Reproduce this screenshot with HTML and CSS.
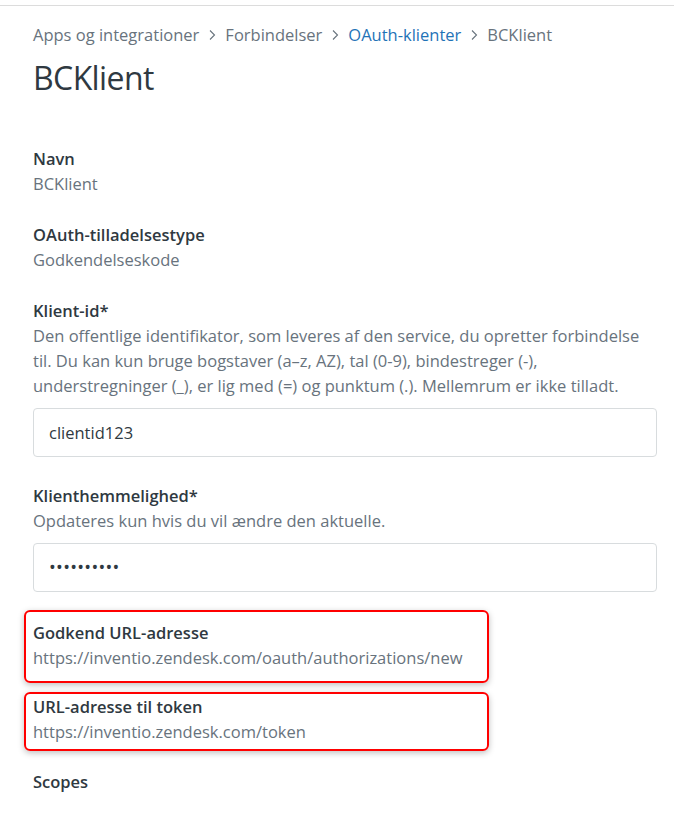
FILE: index.html
```
<!DOCTYPE html>
<html lang="da">
<head>
<meta charset="utf-8">
<title>BCKlient</title>
<link rel="stylesheet" href="styles.css">
</head>
<body>
<div class="topbar"></div>
<main class="page">
  <nav class="crumbs">
    <span class="crumb">Apps og integrationer</span>
    <svg class="chev" width="14" height="12" viewBox="0 0 14 12"><polyline points="5,1.5 9.5,6 5,10.5" fill="none" stroke="#68737d" stroke-width="1.1"/></svg>
    <span class="crumb">Forbindelser</span>
    <svg class="chev" width="14" height="12" viewBox="0 0 14 12"><polyline points="5,1.5 9.5,6 5,10.5" fill="none" stroke="#68737d" stroke-width="1.1"/></svg>
    <a class="crumb link" href="#">OAuth-klienter</a>
    <svg class="chev" width="14" height="12" viewBox="0 0 14 12"><polyline points="5,1.5 9.5,6 5,10.5" fill="none" stroke="#68737d" stroke-width="1.1"/></svg>
    <span class="crumb">BCKlient</span>
  </nav>
  <h1 class="title">BCKlient</h1>

  <section class="field first">
    <div class="label">Navn</div>
    <div class="value">BCKlient</div>
  </section>

  <section class="field">
    <div class="label">OAuth-tilladelsestype</div>
    <div class="value">Godkendelseskode</div>
  </section>

  <section class="field">
    <div class="label">Klient-id*</div>
    <div class="value desc">Den offentlige identifikator, som leveres af den service, du opretter forbindelse til. Du kan kun bruge bogstaver (a–z, AZ), tal (0-9), bindestreger (-), understregninger (_), er lig med (=) og punktum (.). Mellemrum er ikke tilladt.</div>
    <div class="input">clientid123</div>
  </section>

  <section class="field">
    <div class="label">Klienthemmelighed*</div>
    <div class="value">Opdateres kun hvis du vil ændre den aktuelle.</div>
    <div class="input dots">••••••••••</div>
  </section>

  <section class="annot annot-1">
    <div class="label">Godkend URL-adresse</div>
    <div class="value">https://inventio.zendesk.com/oauth/authorizations/new</div>
  </section>

  <section class="annot annot-2">
    <div class="label">URL-adresse til token</div>
    <div class="value">https://inventio.zendesk.com/token</div>
  </section>

  <section class="field scopes">
    <div class="label">Scopes</div>
  </section>
</main>
</body>
</html>
```
FILE: styles.css
```
* { box-sizing: border-box; }
html, body { margin: 0; padding: 0; background: #fff; }
body {
  font-family: "Open Sans", "Noto Sans", "Liberation Sans", sans-serif;
  font-size: 16.5px;
  line-height: 25px;
  color: #2f3941;
}
.topbar {
  height: 6px;
  border-bottom: 1px solid #dcdcdc;
}
.page {
  padding: 0 17px 0 33px;
}
.crumbs {
  display: flex;
  align-items: center;
  gap: 5px;
  margin-top: 19px;
  height: 20px;
  line-height: 20px;
  color: #68737d;
}
.crumb { color: #68737d; text-decoration: none; }
.crumb.link { color: #1f73b7; }
.chev { display: block; margin: 0 1px; }
.title {
  margin: 13px 0 0;
  font-size: 32px;
  line-height: 40px;
  font-weight: 400;
  color: #2f3941;
  letter-spacing: -0.6px;
}
.field { margin-top: 26px; }
.field.first { margin-top: 48px; }
.label { font-weight: 600; color: #2f3941; }
.value { color: #68737d; }
.desc { padding-right: 8px; }
.input {
  margin-top: 10px;
  height: 49px;
  border: 1px solid #d8dcde;
  border-radius: 4px;
  padding: 0 15px;
  display: flex;
  align-items: center;
  color: #2f3941;
}
.input.dots { font-size: 18px; letter-spacing: 0.3px; }
.annot {
  width: 465px;
  margin-left: -9px;
  border: 2px solid #ff0000;
  border-radius: 6px;
  padding-left: 7px;
  box-shadow: 0 2px 6px rgba(0, 0, 0, 0.25);
}
.annot-1 { margin-top: 18px; padding-top: 8px; padding-bottom: 11px; }
.annot-2 { margin-top: 9px; padding-top: 0; padding-bottom: 5px; }
.scopes { margin-top: 18px; }
```
